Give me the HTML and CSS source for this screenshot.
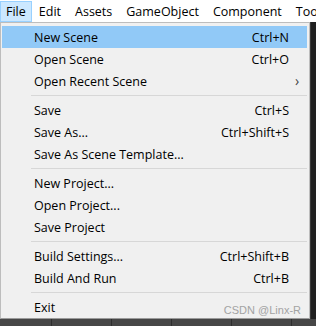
FILE: index.html
```html
<!DOCTYPE html>
<html lang="en">
<head>
  <meta charset="UTF-8">
  <title>File Menu</title>
  <link rel="stylesheet" href="styles.css">
</head>
<body>
<div class="menubar">
  <span class="menubar-item active">File</span>
  <span class="menubar-item">Edit</span>
  <span class="menubar-item">Assets</span>
  <span class="menubar-item">GameObject</span>
  <span class="menubar-item">Component</span>
  <span class="menubar-item">Tools</span>
</div>

<div class="workspace">
  <div class="workspace-top">
    <div class="dropdown">
      <div class="menu-item selected"><span>New Scene</span><span class="shortcut">Ctrl+N</span><span></span></div>
      <div class="menu-item"><span>Open Scene</span><span class="shortcut">Ctrl+O</span><span></span></div>
      <div class="menu-item"><span>Open Recent Scene</span><span class="shortcut"></span><span class="arrow">&#8250;</span></div>
      <div class="separator"></div>
      <div class="menu-item"><span>Save</span><span class="shortcut">Ctrl+S</span><span></span></div>
      <div class="menu-item"><span>Save As...</span><span class="shortcut">Ctrl+Shift+S</span><span></span></div>
      <div class="menu-item"><span>Save As Scene Template...</span><span class="shortcut"></span><span></span></div>
      <div class="separator"></div>
      <div class="menu-item"><span>New Project...</span><span class="shortcut"></span><span></span></div>
      <div class="menu-item"><span>Open Project...</span><span class="shortcut"></span><span></span></div>
      <div class="menu-item"><span>Save Project</span><span class="shortcut"></span><span></span></div>
      <div class="separator"></div>
      <div class="menu-item"><span>Build Settings...</span><span class="shortcut">Ctrl+Shift+B</span><span></span></div>
      <div class="menu-item"><span>Build And Run</span><span class="shortcut">Ctrl+B</span><span></span></div>
      <div class="separator"></div>
      <div class="menu-item"><span>Exit</span><span class="shortcut"></span><span></span></div>
    </div>
    <div class="side-panel"></div>
  </div>
  <div class="scene-grid"></div>
</div>

<div class="watermark">CSDN @Linx-R</div>
</body>
</html>
```

FILE: styles.css
```css
body {
  margin: 0;
  width: 316px;
  height: 326px;
  overflow: hidden;
  background-color: #232323;
  font-family: "Open Sans", "Noto Sans", sans-serif;
  font-size: 12.5px;
  color: #000000;
}

.menubar {
  display: flex;
  height: 22px;
  padding-top: 1px;
  box-sizing: border-box;
  background: #ffffff;
  white-space: nowrap;
  overflow: hidden;
}

.menubar-item {
  padding: 0 6px;
  line-height: 19px;
  border: 1px solid transparent;
}

.menubar-item.active {
  padding: 0 5px;
  background: #cce8ff;
  border-color: #99d1ff;
}

.workspace {
  display: flex;
  flex-direction: column;
  height: 304px;
}

.workspace-top {
  display: flex;
}

.dropdown {
  width: 310px;
  box-sizing: border-box;
  padding: 3px 2px 0 1px;
  background: #f0f0f0;
  border: 1px solid #bdbdbd;
  border-bottom-color: #9a9a9a;
}

.menu-item {
  display: grid;
  grid-template-columns: 1fr auto 18px;
  align-items: center;
  height: 22px;
  padding-left: 32px;
  white-space: nowrap;
}

.menu-item.selected {
  background: #91c9f7;
}

.arrow {
  padding-left: 6px;
  font-size: 14px;
  line-height: 14px;
  color: #444444;
}

.separator {
  height: 1px;
  margin: 3px 0 3px 29px;
  background: #d7d7d7;
}

.side-panel {
  flex: 1;
  background: #202020;
  border-left: 1px solid #3a3a3a;
}

.scene-grid {
  flex: 1;
  background-color: #474747;
  background-image: repeating-linear-gradient(90deg, transparent 0, transparent 51px, #2e2e2e 51px, #2e2e2e 52px, transparent 52px, transparent 60px);
  background-position: 0 0;
}

.watermark {
  position: absolute;
  right: 15px;
  top: 304px;
  font-family: "Liberation Sans", Arial, sans-serif;
  font-size: 11px;
  color: #a3a3a3;
}
```
